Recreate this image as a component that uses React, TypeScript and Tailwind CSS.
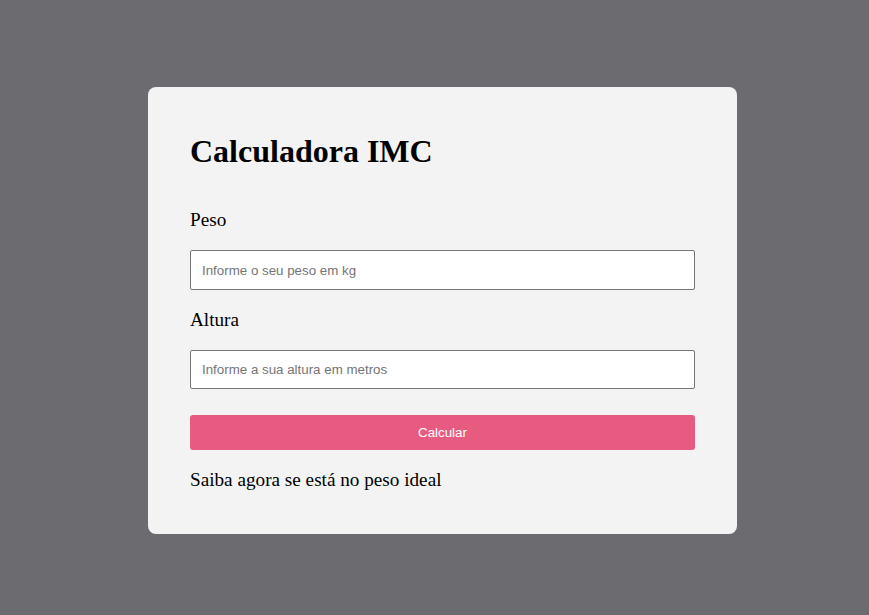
export default function App() {
  return (
    <div className="min-h-[615px] w-full bg-[#6c6b70] pl-[148px] pt-[87px]" style={{}}>
      <div className="flex w-[589px] flex-col rounded-[8px] bg-[#f3f3f3] px-[42px] pt-[46px] pb-[43px] font-['Liberation_Serif',serif] text-black">
        <h1 className="h-[36px] text-[32px] font-bold leading-[36px]">Calculadora IMC</h1>
        <label className="mt-[40px] h-[22px] text-[19.2px] leading-[22px]">Peso</label>
        <input
          type="text"
          placeholder="Informe o seu peso em kg"
          className="mt-[19px] h-[40px] w-full rounded-[2px] border border-[#767676] bg-white px-[11px] font-['Liberation_Sans',sans-serif] text-[13.333px] text-black placeholder:text-[#757575] outline-none"
        />
        <label className="mt-[19px] h-[22px] text-[19.2px] leading-[22px]">Altura</label>
        <input
          type="text"
          placeholder="Informe a sua altura em metros"
          className="mt-[19px] h-[39px] w-full rounded-[2px] border border-[#767676] bg-white px-[11px] font-['Liberation_Sans',sans-serif] text-[13.333px] text-black placeholder:text-[#757575] outline-none"
        />
        <button className="mt-[26px] h-[35px] w-full rounded-[3px] bg-[#e85b81] font-['Liberation_Sans',sans-serif] text-[13.333px] text-white">
          Calcular
        </button>
        <p className="mt-[19px] h-[22px] text-[19.2px] leading-[22px]">Saiba agora se está no peso ideal</p>
      </div>
    </div>
  );
}
